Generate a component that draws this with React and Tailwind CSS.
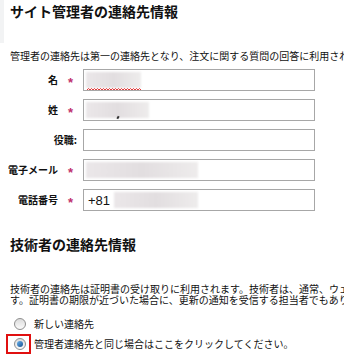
import React from 'react';

const jp = { fontFamily: '"Noto Sans CJK JP", "Liberation Sans", sans-serif' };

const Star = () => (
    <span className="text-[#c0306a] text-[13px] font-bold leading-none" style={{ fontFamily: '"Liberation Sans", sans-serif' }}>*</span>
);

const Blur = ({ w }) => (
    <div className={`h-[16px] ${w} bg-gradient-to-r from-[#ebe7e9] via-[#e2dee0] to-[#eeecec] blur-[1px]`} />
);

const Row = ({ label, required, children }) => (
    <div className="flex items-center h-[22px]">
        <div className="w-[83px] flex items-center justify-end">
            {required ? (
                <>
                    <span className="text-[10px] font-bold leading-none">{label}</span>
                    <span className="w-[25px] pl-[10px]"><Star /></span>
                </>
            ) : (
                <span className="text-[10px] font-bold leading-none pr-[6px]">{label}</span>
            )}
        </div>
        <div className="w-[232px] h-[22px] border border-[#a7a7a7] bg-white flex items-center pl-[2px] relative">
            {children}
        </div>
    </div>
);

const Radio = ({ checked }) => (
    <div className="w-[12px] h-[12px] rounded-full border border-[#8e8e8e] bg-gradient-to-b from-[#dcdcdc] to-[#fbfbfb] flex items-center justify-center">
        {checked && <div className="w-[6px] h-[6px] rounded-full bg-gradient-to-br from-[#6cb4f0] to-[#11508f]" />}
    </div>
);

export default function App() {
    return (
        <div className="w-[344px] h-[358px] overflow-hidden bg-white text-[#111]" style={jp}>
            <div className="h-[43px] border-l-4 border-[#f2f3f4] pl-[6px] pt-[1px]">
                <h2 className="text-[14px] font-bold leading-[20px] whitespace-nowrap">サイト管理者の連絡先情報</h2>
            </div>
            <p className="mt-[7px] pl-[10px] text-[10px] leading-[12px] whitespace-nowrap">
                管理者の連絡先は第一の連絡先となり、注文に関する質問の回答に利用されます。
            </p>

            <div className="mt-[7px] flex flex-col gap-[8px]">
                <Row label="名" required>
                    <div className="relative">
                        <Blur w="w-[55px]" />
                        <svg className="absolute left-[1px] top-[16px]" width="54" height="3" viewBox="0 0 54 3">
                            <path d="M0 2 L1.5 0.5 L3 2 L4.5 0.5 L6 2 L7.5 0.5 L9 2 L10.5 0.5 L12 2 L13.5 0.5 L15 2 L16.5 0.5 L18 2 L19.5 0.5 L21 2 L22.5 0.5 L24 2 L25.5 0.5 L27 2 L28.5 0.5 L30 2 L31.5 0.5 L33 2 L34.5 0.5 L36 2 L37.5 0.5 L39 2 L40.5 0.5 L42 2 L43.5 0.5 L45 2 L46.5 0.5 L48 2 L49.5 0.5 L51 2 L52.5 0.5 L54 2" fill="none" stroke="#e02020" strokeWidth="0.9" />
                        </svg>
                    </div>
                </Row>
                <Row label="姓" required>
                    <Blur w="w-[63px]" />
                    <span className="absolute left-[33px] top-[16px] w-[2px] h-[3px] bg-[#333] rotate-[30deg]" />
                </Row>
                <Row label="役職:" />
                <Row label="電子メール" required>
                    <Blur w="w-[112px]" />
                </Row>
                <Row label="電話番号" required>
                    <span className="text-[13px] leading-none pl-[2px] pr-[4px]" style={{ fontFamily: '"Liberation Sans", sans-serif' }}>+81</span>
                    <Blur w="w-[84px]" />
                </Row>
            </div>

            <div className="mt-[22px] h-[43px] pl-[10px] pt-[1px]">
                <h2 className="text-[14px] font-bold leading-[20px] whitespace-nowrap">技術者の連絡先情報</h2>
            </div>
            <p className="mt-[7px] pl-[10px] text-[10px] leading-[11px] whitespace-nowrap">
                技術者の連絡先は証明書の受け取りに利用されます。技術者は、通常、ウェブサイトの担当者で
                <br />
                す。証明書の期限が近づいた場合に、更新の通知を受信する担当者でもあります。
            </p>

            <div className="mt-[8px] flex flex-col">
                <div className="flex items-center h-[21px] pl-[6px]">
                    <div className="w-[25px] h-[20px] border-2 border-transparent pl-[6px] flex items-center">
                        <Radio />
                    </div>
                    <span className="ml-[3px] text-[10px] leading-none">新しい連絡先</span>
                </div>
                <div className="flex items-center h-[20px] pl-[6px]">
                    <div className="w-[25px] h-[20px] border-2 border-[#e01010] pl-[6px] flex items-center">
                        <Radio checked />
                    </div>
                    <span className="ml-[3px] text-[10px] leading-none">管理者連絡先と同じ場合はここをクリックしてください。</span>
                </div>
            </div>
        </div>
    );
}
